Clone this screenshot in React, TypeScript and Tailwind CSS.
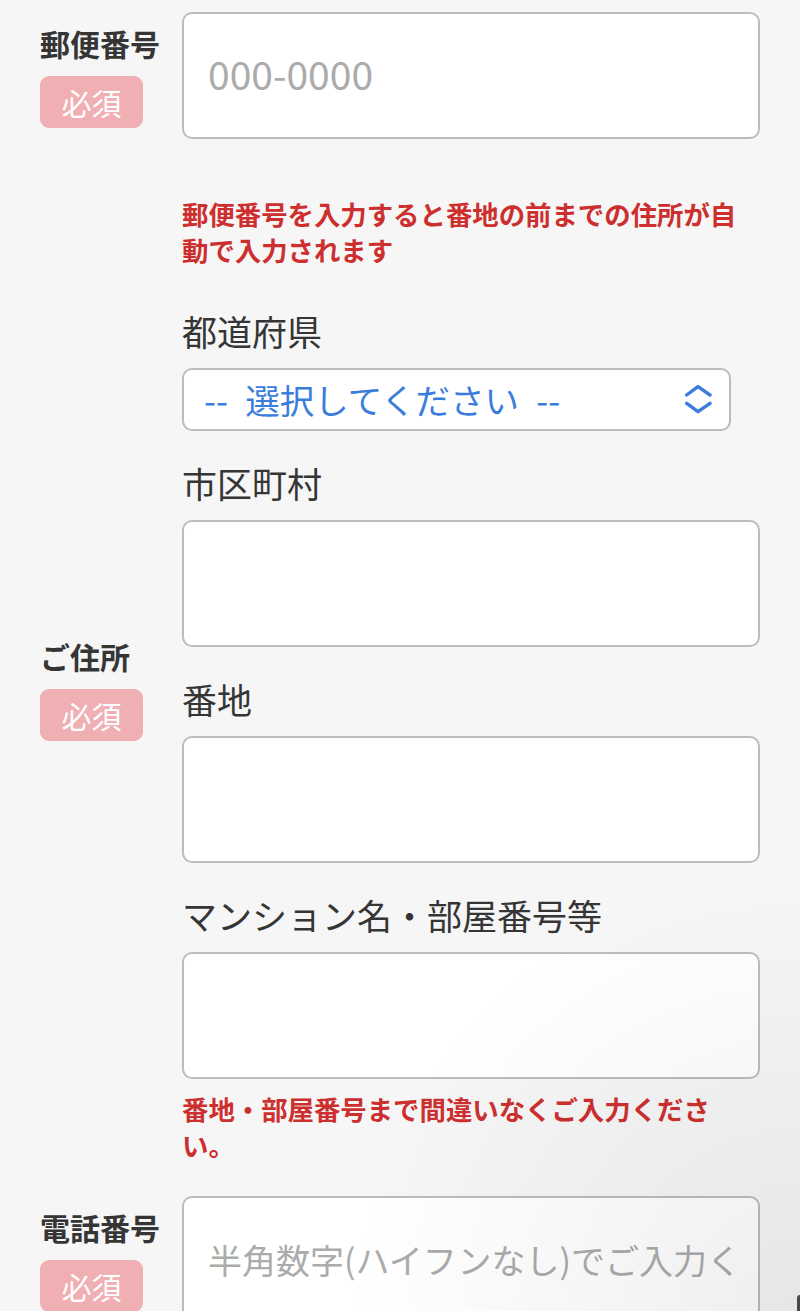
import type { ReactNode } from "react";

const inputCls =
  "block h-[127px] w-[578px] rounded-[10px] border-2 border-[#bcbcbc] bg-white px-[24px] text-[34px] text-[#333] outline-none placeholder:text-[#ababab]";

function Head({ label, lift = false }: { label: string; lift?: boolean }) {
  return (
    <div className={`${lift ? "mb-[8px]" : ""} w-[142px] shrink-0`}>
      <div className="text-[30px] font-bold leading-[40px] text-[#353535]">{label}</div>
      <div className="mt-[13px] flex h-[52px] w-[103px] items-center justify-center rounded-[9px] bg-[#f0afb3] text-[30px] leading-none text-white">
        必須
      </div>
    </div>
  );
}

function SubLabel({ children, first = false }: { children: ReactNode; first?: boolean }) {
  return (
    <div className={`${first ? "" : "mt-[27px]"} text-[35px] leading-[49px] text-[#353535]`}>
      {children}
    </div>
  );
}

function Note({ children, width }: { children: ReactNode; width: string }) {
  return (
    <p className={`ml-[142px] ${width} text-[26.4px] font-bold leading-[36px] text-[#cd2f2f]`}>
      {children}
    </p>
  );
}

export default function App() {
  return (
    <div className="relative min-h-[1311px] overflow-hidden bg-[#f6f6f6] pl-[40px] pt-[12px] font-['Noto_Sans_CJK_JP',sans-serif]">
      {/* 郵便番号 */}
      <div className="flex items-center">
        <Head label="郵便番号" />
        <input className={`${inputCls} placeholder:text-[39px]`} placeholder="000-0000" />
      </div>

      <div className="mt-[57px]">
        <Note width="w-[578px]">郵便番号を入力すると番地の前までの住所が自動で入力されます</Note>
      </div>

      {/* ご住所 */}
      <div className="mt-[38px] flex items-center">
        <Head label="ご住所" lift />
        <div className="w-[578px]">
          <SubLabel first>都道府県</SubLabel>
          <div className="relative mt-[13px] w-[549px]">
            <select className="block h-[63px] w-[549px] appearance-none rounded-[10px] border-2 border-[#bcbcbc] bg-white pl-[20px] text-[34.5px] text-[#3b7ddd] outline-none">
              <option>{"--\u2002選択してください\u2002--"}</option>
            </select>
            <svg
              className="pointer-events-none absolute left-[502px] top-[16px]"
              width="28"
              height="32"
              viewBox="0 0 28 32"
              fill="none"
              stroke="#3b7ddd"
              strokeWidth="3.4"
              strokeLinecap="round"
              strokeLinejoin="round"
            >
              <polyline points="2.7,11 14,2.7 26,11" />
              <polyline points="2.7,19.3 14,27.7 26,19.3" />
            </svg>
          </div>

          <SubLabel>市区町村</SubLabel>
          <input className={`${inputCls} mt-[13px]`} />

          <SubLabel>番地</SubLabel>
          <input className={`${inputCls} mt-[13px]`} />

          <SubLabel>マンション名・部屋番号等</SubLabel>
          <input className={`${inputCls} mt-[13px]`} />
        </div>
      </div>

      <div className="mt-[12px]">
        <Note width="w-[549px]">番地・部屋番号まで間違いなくご入力ください。</Note>
      </div>

      {/* 電話番号 */}
      <div className="mt-[33px] flex items-center">
        <Head label="電話番号" />
        <input className={inputCls} placeholder="半角数字(ハイフンなし)でご入力ください" />
      </div>

      {/* soft shadow of a floating element at the bottom-right corner */}
      <div className="pointer-events-none absolute bottom-0 right-0 h-[460px] w-[460px] bg-[radial-gradient(circle_at_100%_100%,rgba(0,0,0,0.065),rgba(0,0,0,0)_70%)]" />
      <div className="pointer-events-none absolute bottom-0 right-0 h-[28px] w-[3px] rounded-tl-full bg-[#4a4a4a]" />
    </div>
  );
}
